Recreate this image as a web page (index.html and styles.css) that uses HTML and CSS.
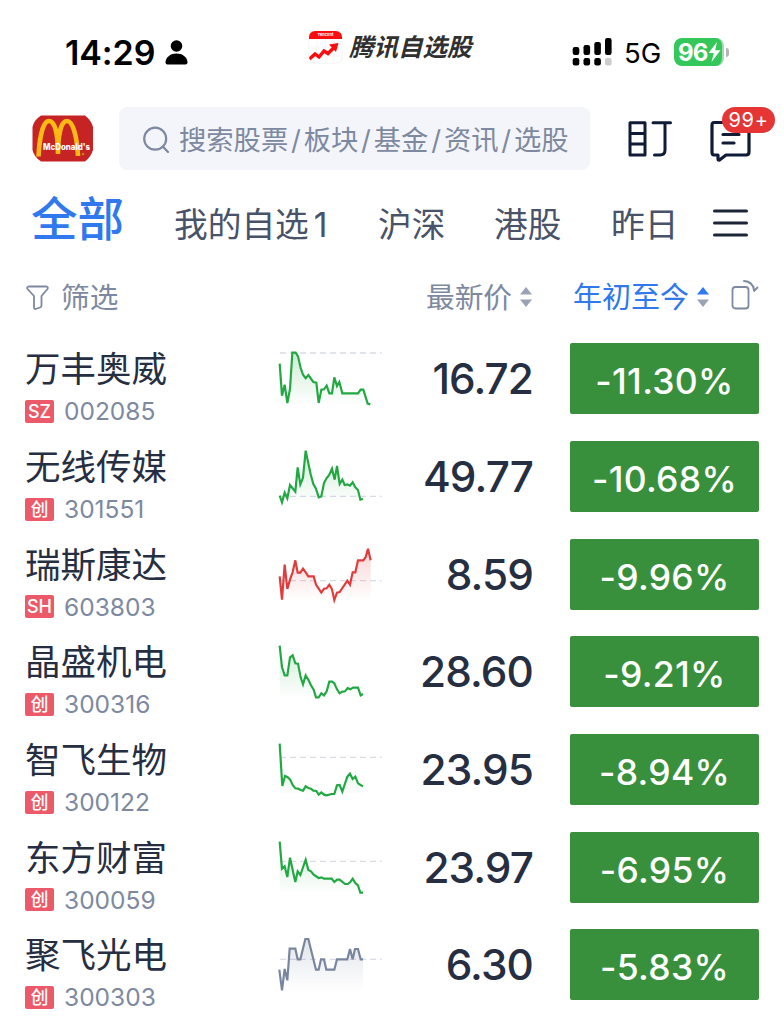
FILE: index.html
```html
<!DOCTYPE html>
<html lang="zh-CN">
<head>
    <meta charset="UTF-8">
    <title>腾讯自选股</title>
    <link rel="stylesheet" href="styles.css">
</head>
<body>
    <div class="status">
        <span class="time">14:29</span>
        <svg class="person" width="23" height="25" viewBox="0 0 23 25">
            <circle cx="11.5" cy="6" r="5.8"/>
            <path d="M0.5 22.5C0.5 17 6 13.6 11.5 13.6S22.5 17 22.5 22.5Q22.5 24.5 20.5 24.5H2.5Q0.5 24.5 0.5 22.5Z"/>
        </svg>
        <div class="brand">
            <div class="app-icon">
                <div class="app-top">Tencent</div>
                <svg width="33" height="26" viewBox="0 0 33 26">
                    <path d="M8 0V25M16.500 0V25M25 0V25M0 8H33M0 17H33" stroke="#f2f2f2" stroke-width="0.7"/>
                    <path d="M0.500 20L6 15L10 18L15 12L19 14.500L26 7.500" fill="none" stroke="#fb0d0d" stroke-width="3.4"/>
                    <path d="M20 5.500L29.500 4L27 13Z" fill="#fb0d0d"/>
                </svg>
            </div>
            <span class="brand-name">腾讯自选股</span>
        </div>
        <svg class="signal" width="40" height="28" viewBox="0 0 40 28">
            <rect x="0.700" y="9" width="6.600" height="8" rx="2.200"/>
            <rect x="11.500" y="7" width="6.600" height="10" rx="2.200"/>
            <rect x="22.300" y="4" width="6.600" height="13" rx="2.200"/>
            <rect x="33" y="0" width="6.600" height="17" rx="2.200"/>
            <rect x="0.700" y="20" width="6.600" height="7.500" rx="2.200"/>
            <rect x="11.500" y="20" width="6.600" height="7.500" rx="2.200"/>
            <rect x="22.300" y="20" width="6.600" height="7.500" rx="2.200"/>
            <rect x="33" y="20" width="6.600" height="7.500" rx="2.200" fill="#ccc"/>
        </svg>
        <span class="net">5G</span>
        <div class="battery">
            <span>96</span>
            <svg width="13" height="20" viewBox="0 0 13 20"><path d="M9 0L0.500 11H5.800L3.500 20L12.500 8.300H7.200Z" fill="#fff"/></svg>
        </div>
        <div class="battery-cap"></div>
    </div>

    <div class="topbar">
        <svg class="avatar" width="62" height="47" viewBox="0 0 62 47">
            <path d="M9 0.500H53Q59 5 61 12V35Q59 42 53 46.500H9Q2 42 0.500 35V12Q2 5 9 0.500Z" fill="#c62424"/>
            <path d="M6.500 41.500C7.500 22 11 6 17 6S26 20 26 39C26 20 29 6 35 6S45 22 46 41" fill="none" stroke="#fbb914" stroke-width="4.600"/>
            <text x="11" y="34.500" textLength="47" lengthAdjust="spacingAndGlyphs">McDonald's</text>
            <circle cx="51" cy="39" r="1.300" fill="#d77a1c"/>
        </svg>
        <div class="search">
            <svg width="28" height="28" viewBox="0 0 28 28" fill="none" stroke="#7d89a0" stroke-width="2.200" stroke-linecap="round">
                <circle cx="12.200" cy="13.700" r="11"/>
                <path d="M19.800 21.500L25 27"/>
            </svg>
            <span>搜索股票<i>/</i>板块<i>/</i>基金<i>/</i>资讯<i>/</i>选股</span>
        </div>
        <svg class="watch" width="44" height="36" viewBox="0 0 44 36" fill="none" stroke="#101b36" stroke-width="3" stroke-linecap="round" stroke-linejoin="round">
            <path d="M2 1.800H17V34H2ZM2 12.500H17M2 23H17M25 1.800H42.500M37 2V29Q37 34 32 34H26.500"/>
        </svg>
        <div class="msg">
            <svg width="42" height="42" viewBox="0 0 42 42" fill="none" stroke="#101b36" stroke-width="3.200" stroke-linecap="round" stroke-linejoin="round">
                <path d="M4 2.500H36Q39 2.500 39 5.500V32Q39 35 36 35H16L9.500 40Q8 40.500 8 39V35H4Q2 35 2 32V5.500Q2 2.500 4 2.500ZM13 14.500H29M13 23H24"/>
            </svg>
            <span class="badge">99+</span>
        </div>
    </div>

    <div class="tabs">
        <span class="active">全部</span>
        <span>我的自选<b>1</b></span>
        <span>沪深</span>
        <span>港股</span>
        <span>昨日</span>
        <svg width="35" height="28" viewBox="0 0 35 28" stroke="#1c2438" stroke-width="3" stroke-linecap="round">
            <path d="M1.500 2H33.500M1.500 14H33.500M1.500 26H33.500"/>
        </svg>
    </div>

    <div class="heads">
        <svg width="23" height="25" viewBox="0 0 23 25" fill="none" stroke="#7d89a0" stroke-width="1.800" stroke-linejoin="round">
            <path d="M2.500 1.500H20.500Q22.500 2 21.500 4L15.500 11V20.500Q15.500 22 14 22.500L9.500 24Q8 24 8 22.500V11L1.500 4Q0.500 2 2.500 1.500Z"/>
        </svg>
        <span class="filter">筛选</span>
        <span class="latest">最新价</span>
        <svg class="sort" width="12" height="20" viewBox="0 0 12 20" fill="#9aa3b5"><path d="M6 0L12 7.500H0Z"/><path d="M0 12.500H12L6 20Z"/></svg>
        <span class="ytd">年初至今</span>
        <svg class="sort" width="12" height="20" viewBox="0 0 12 20" fill="#9aa3b5"><path d="M6 0L12 7.500H0Z" fill="#2f78ee"/><path d="M0 12.500H12L6 20Z"/></svg>
        <svg class="rotate" width="28" height="30" viewBox="0 0 28 30" fill="none" stroke="#7d89a0" stroke-width="1.800" stroke-linecap="round" stroke-linejoin="round">
            <rect x="1.500" y="7" width="16" height="21.500" rx="3"/>
            <path d="M13 1Q22 1.500 23 10.500M22.500 6.500L23 11L26.500 7.500"/>
        </svg>
    </div>

    <div id="list" class="list"></div>

    <script src="app.js"></script>
</body>
</html>
```

FILE: styles.css
```css
body {
    margin: 0;
    width: 784px;
    height: 1024px;
    overflow: hidden;
    background-color: #fff;
    font-family: Inter, "Noto Sans CJK SC", sans-serif;
    color: #262e42;
}

svg {
    display: block;
    flex: none;
}

span {
    white-space: nowrap;
}

.status {
    display: flex;
    align-items: center;
    height: 104px;
    box-sizing: border-box;
    padding-left: 65px;
    color: #000;
}

.time {
    width: 100px;
    font-size: 34px;
    font-weight: 600;
    letter-spacing: -0.1px;
}

.brand {
    display: flex;
    width: 263px;
    margin-left: 121px;
    margin-top: -10px;
    align-items: center;
}

.app-icon {
    width: 33px;
    height: 32px;
    border-radius: 6px;
    overflow: hidden;
    box-shadow: 0 0 1px #bbb;
}

.app-top {
    height: 8px;
    background-color: #fb0d0d;
    color: #fff;
    font-size: 4px;
    font-weight: 700;
    line-height: 8px;
    text-align: center;
}

.brand-name {
    margin-left: 7px;
    font-size: 24.5px;
    font-weight: 700;
    font-style: italic;
    line-height: 30px;
    color: #303030;
}

.net {
    width: 50px;
    margin-left: 12px;
    font-size: 27.5px;
    line-height: 34px;
    padding-top: 2px;
}

.battery {
    display: flex;
    align-items: center;
    width: 50px;
    height: 28px;
    box-sizing: border-box;
    padding-left: 4px;
    border-right: 2px solid #a5d9b2;
    border-radius: 8px;
    background-color: #34c759;
    color: #fff;
    font-size: 24px;
    font-weight: 700;
    letter-spacing: -0.8px;
}

.battery-cap {
    width: 3px;
    height: 9px;
    margin-left: 2px;
    border-radius: 0 4px 4px 0;
    background-color: #b5b5b5;
}

.topbar {
    display: flex;
    align-items: center;
    height: 69px;
    padding-left: 32px;
}

.avatar text {
    font-family: Inter, sans-serif;
    font-size: 8.5px;
    font-weight: 800;
    fill: #fff;
}

.search {
    display: flex;
    align-items: center;
    width: 471px;
    height: 63px;
    box-sizing: border-box;
    margin-left: 25px;
    padding-left: 24px;
    border-radius: 8px;
    background-color: #f4f5fa;
    color: #7d89a0;
    font-size: 27.3px;
}

.search span {
    margin-left: 8px;
    margin-top: -1px;
}

.search i {
    display: inline-block;
    width: 15.5px;
    text-align: center;
    font-style: normal;
}

.watch {
    margin-left: 38px;
}

.msg {
    position: relative;
    margin-left: 38px;
    margin-top: 4px;
}

.badge {
    position: absolute;
    left: 12px;
    top: -13px;
    width: 53px;
    height: 26px;
    border-radius: 13px;
    background-color: #e63535;
    color: #fff;
    font-size: 20px;
    line-height: 27px;
    text-align: center;
    letter-spacing: 0.7px;
}

.tabs {
    display: grid;
    grid-template-columns: 143px 204px 116px 117px 102px 36px;
    align-items: center;
    height: 99px;
    padding-left: 31px;
    font-size: 33.7px;
    color: #485268;
}

.tabs b {
    margin-left: 5px;
    font-weight: 400;
}

.tabs .active {
    margin-top: -15px;
    font-size: 46.5px;
    font-weight: 500;
    color: #2f78ee;
}

.heads {
    display: flex;
    align-items: center;
    height: 50px;
    padding-left: 26px;
    font-size: 28.7px;
    color: #7d89a0;
}

.heads span {
    margin-top: -4px;
}

.filter {
    width: 365px;
    margin-left: 12px;
}

.latest {
    width: 94px;
}

.sort {
    width: 12px;
}

.ytd {
    width: 124px;
    margin-left: 41px;
    font-size: 29px;
    color: #2f78ee;
}

.rotate {
    margin-left: 22px;
    margin-top: -4px;
}

.list {
    padding-top: 21.4px;
}

.row {
    display: grid;
    grid-template-columns: 252px 107px 149px 189px;
    height: 97.67px;
    padding-left: 25px;
}

.name {
    height: 52px;
    font-size: 35.5px;
    line-height: 54px;
}

.sub {
    display: flex;
    align-items: center;
    height: 32px;
    font-size: 24.5px;
    color: #7d89a0;
}

.market {
    width: 29px;
    height: 23px;
    margin-right: 10px;
    border-radius: 2px;
    background-color: #ec5a69;
    color: #fff;
    font-size: 18px;
    font-weight: 500;
    line-height: 23px;
    text-align: center;
}

.price {
    font-size: 42.3px;
    font-weight: 500;
    line-height: 71px;
    text-align: right;
    letter-spacing: -0.9px;
}

.change {
    height: 71px;
    margin-left: 37px;
    width: 189px;
    border-radius: 2px;
    background-color: #38903c;
    color: #fff;
    font-size: 35.5px;
    font-weight: 500;
    line-height: 78px;
    text-align: center;
    letter-spacing: 0.3px;
}
```

FILE: app.js
```js
var stocks = [
    { name: "万丰奥威", market: "SZ", code: "002085", price: "16.72", change: "-11.30%", color: "#22a843", base: 30,
      points: "8,62 15,158 23,125 31,180 39,138 46,29 56,29 63,40 71,75 78,95 86,106 94,96 109,117 118,119 125,180 133,140 141,139 149,128 157,151 165,151 172,103 180,129 187,117 196,151 243,151 251,140 259,140 272,182 280,184" },
    { name: "无线传媒", market: "创", code: "301551", price: "49.77", change: "-10.68%", color: "#22a843", base: 166,
      points: "8,164 15,184 23,155 31,172 39,132 55,152 62,79 70,130 78,110 86,29 94,67 101,100 109,129 117,143 125,169 133,166 141,126 148,113 157,101 165,83 173,116 180,75 188,129 196,116 203,132 211,130 219,134 227,124 235,139 243,147 250,176 258,174" },
    { name: "瑞斯康达", market: "SH", code: "603803", price: "8.59", change: "-9.96%", color: "#e23b3b", base: 125,
      points: "8,112 15,182 23,77 31,150 39,122 47,99 55,64 62,101 70,101 78,89 86,100 94,112 110,112 117,137 125,149 133,161 141,149 149,148 157,137 165,151 172,183 180,161 188,159 211,125 219,137 227,100 235,100 243,64 259,64 266,54 273,29 281,64" },
    { name: "晶盛机电", market: "创", code: "300316", price: "28.60", change: "-9.21%", color: "#22a843", base: null,
      points: "8,29 15,93 23,118 31,118 39,64 47,58 55,82 63,83 71,124 78,145 86,118 94,131 102,148 110,161 117,184 125,184 133,172 141,178 149,166 157,137 165,137 172,142 180,160 188,172 196,167 204,166 212,156 220,160 228,155 243,155 251,178 258,174" },
    { name: "智飞生物", market: "创", code: "300122", price: "23.95", change: "-8.94%", color: "#22a843", base: 70,
      points: "8,29 16,156 24,126 31,129 39,136 47,153 55,163 63,164 71,168 78,170 86,157 94,162 102,164 109,170 118,171 125,182 133,175 141,182 149,184 164,180 172,180 180,154 188,153 196,173 211,128 219,119 227,135 235,128 243,148 251,153 258,157" },
    { name: "东方财富", market: "创", code: "300059", price: "23.97", change: "-6.95%", color: "#22a843", base: 88,
      points: "8,29 15,110 23,103 31,135 39,77 47,114 55,150 62,118 70,129 86,83 94,114 102,118 110,128 125,138 133,136 141,140 164,140 172,150 180,143 188,143 204,156 212,156 220,150 227,140 235,153 243,160 250,182 258,182" },
    { name: "聚飞光电", market: "创", code: "300303", price: "6.30", change: "-5.83%", color: "#78869d", base: 91,
      points: "7,122 15,184 23,120 31,154 38,59 55,59 62,91 70,91 85,30 94,30 117,122 125,122 132,91 141,91 148,122 172,122 180,91 211,91 219,60 227,91 234,60 243,60 251,91 258,91" }
];

function chart(s, i) {
    var last = s.points.split(" ").pop().split(",")[0];
    var line = "";
    if (s.base !== null) {
        line = '<path d="M9 ' + s.base + 'H314" stroke="#d9dbe6" stroke-width="4" stroke-dasharray="18 12"/>';
    }
    return '<svg width="106.67" height="71" viewBox="0 0 320 213">' +
        '<defs><linearGradient id="g' + i + '" x1="0" y1="0" x2="0" y2="1">' +
        '<stop offset="0" stop-color="' + s.color + '" stop-opacity="0.22"/>' +
        '<stop offset="1" stop-color="' + s.color + '" stop-opacity="0"/></linearGradient></defs>' + line +
        '<polygon points="8,186 ' + s.points + ' ' + last + ',186" fill="url(#g' + i + ')"/>' +
        '<polyline points="' + s.points + '" fill="none" stroke="' + s.color + '" stroke-width="6.5"/></svg>';
}

var html = "";
stocks.forEach(function (s, i) {
    html += '<div class="row"><div><div class="name">' + s.name + '</div>' +
        '<div class="sub"><span class="market">' + s.market + '</span><span>' + s.code + '</span></div></div>' +
        chart(s, i) +
        '<div class="price">' + s.price + '</div>' +
        '<div class="change">' + s.change + '</div></div>';
});
document.getElementById("list").innerHTML = html;
```
